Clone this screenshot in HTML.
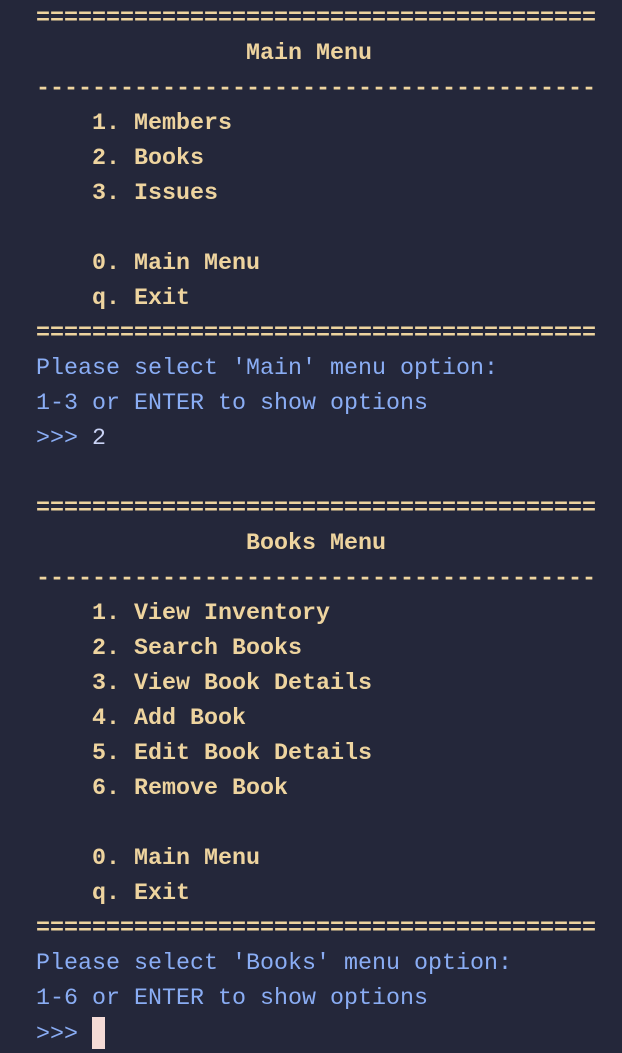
<!DOCTYPE html>
<html><head><meta charset="utf-8"><style>
html,body{margin:0;padding:0;background:#24273a;width:622px;height:1048px;overflow:hidden}
pre{margin:0;position:absolute;left:36px;top:2px;font-family:"Liberation Mono",monospace;font-size:23.33px;line-height:35px;color:#cad3f5;letter-spacing:0}
.y{color:#eed49f;font-weight:bold}
.b{color:#8aadf4}
.c{display:inline-block;width:13px;height:32px;background:#f4dbd6;vertical-align:-9px}
</style></head><body>
<pre><span class="y">========================================
               Main Menu
----------------------------------------
    1. Members
    2. Books
    3. Issues

    0. Main Menu
    q. Exit
========================================</span>
<span class="b">Please select 'Main' menu option:
1-3 or ENTER to show options
&gt;&gt;&gt; </span>2

<span class="y">========================================
               Books Menu
----------------------------------------
    1. View Inventory
    2. Search Books
    3. View Book Details
    4. Add Book
    5. Edit Book Details
    6. Remove Book

    0. Main Menu
    q. Exit
========================================</span>
<span class="b">Please select 'Books' menu option:
1-6 or ENTER to show options
&gt;&gt;&gt; </span><span class="c"></span></pre>
</body></html>
